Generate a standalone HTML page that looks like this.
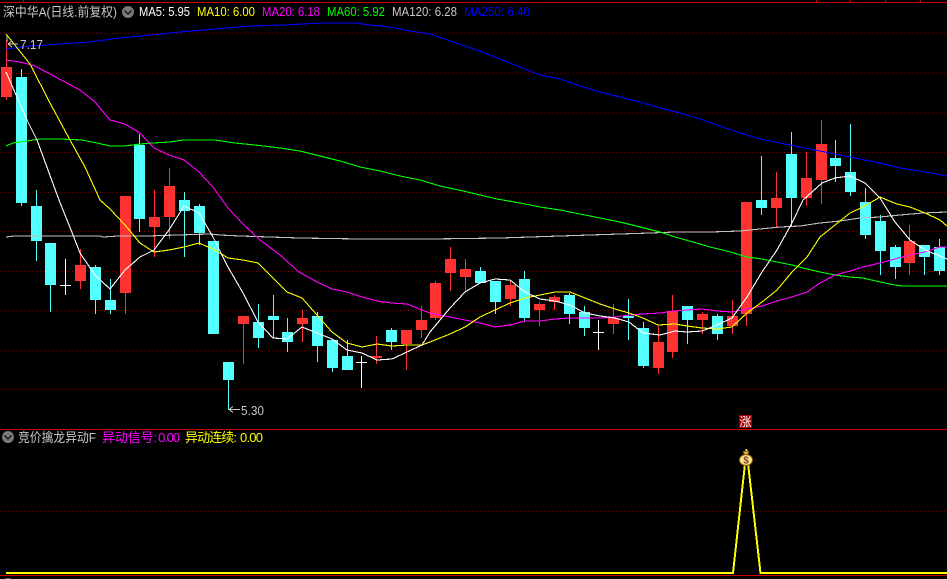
<!DOCTYPE html>
<html><head><meta charset="utf-8"><style>
html,body{margin:0;padding:0;background:#000;width:947px;height:579px;overflow:hidden}
svg{display:block}
text{font-family:"Liberation Sans","WenQuanYi Zen Hei","Noto Sans CJK SC",sans-serif;font-size:13px}
.l{fill:none;stroke-width:1.1;shape-rendering:crispEdges}
</style></head><body>
<svg width="947" height="579" viewBox="0 0 947 579" xmlns="http://www.w3.org/2000/svg">
<rect width="947" height="579" fill="#000"/>
<g shape-rendering="crispEdges">
<path d="M0 33.500H947M0 73.500H947M0 113.500H947M0 152.500H947M0 192.500H947M0 231.500H947M0 271.500H947M0 310.500H947M0 350.500H947M0 389.500H947M0 511.500H947" stroke="#800000" stroke-width="1" stroke-dasharray="1 3" fill="none"/>
<path d="M0 2.500H947M0 429.500H947M0 575.500H947M23.500 0V2M816.500 0V2M850.500 0V2M885.500 0V2M920.500 0V2" stroke="#c80000" stroke-width="1" fill="none"/>
<path fill="#ff3232" d="M1 67h11v30h-11zM6 40h1v60h-1zM75 265h11v16h-11zM80 249h1v40h-1zM120 196h11v97h-11zM125 293h1v21h-1zM149 217h11v10h-11zM154 190h1v67h-1zM164 186h11v31h-11zM169 168h1v71h-1zM238 316h11v8h-11zM243 316h1v48h-1zM297 318h11v6h-11zM302 310h1v32h-1zM371 356h11v2h-11zM376 336h1v28h-1zM401 330h11v14h-11zM406 344h1v26h-1zM416 320h11v10h-11zM421 306h1v32h-1zM430 283h11v35h-11zM435 281h1v39h-1zM445 259h11v14h-11zM450 247h1v44h-1zM460 269h11v8h-11zM465 259h1v32h-1zM505 285h11v14h-11zM510 281h1v25h-1zM534 304h11v6h-11zM539 302h1v24h-1zM549 297h11v5h-11zM554 295h1v15h-1zM608 318h11v6h-11zM613 304h1v30h-1zM653 342h11v26h-11zM658 326h1v48h-1zM667 311h11v41h-11zM672 295h1v63h-1zM697 314h11v6h-11zM702 312h1v22h-1zM727 316h11v10h-11zM732 300h1v34h-1zM741 202h11v112h-11zM746 202h1v124h-1zM771 198h11v10h-11zM776 172h1v56h-1zM801 178h11v20h-11zM806 152h1v54h-1zM816 144h11v36h-11zM821 120h1v84h-1zM904 241h11v22h-11zM909 225h1v50h-1z"/>
<path fill="#54ffff" d="M16 77h11v126h-11zM21 69h1v137h-1zM31 206h11v35h-11zM36 190h1v71h-1zM45 243h11v42h-11zM50 285h1v27h-1zM90 267h11v33h-11zM95 265h1v49h-1zM105 300h11v10h-11zM110 279h1v35h-1zM134 145h11v74h-11zM139 134h1v98h-1zM179 200h11v11h-11zM184 192h1v65h-1zM194 206h11v27h-11zM199 204h1v41h-1zM208 241h11v93h-11zM223 362h11v18h-11zM228 380h1v30h-1zM253 322h11v16h-11zM258 304h1v44h-1zM268 316h11v4h-11zM273 295h1v43h-1zM282 332h11v10h-11zM287 318h1v34h-1zM312 316h11v30h-11zM317 312h1v50h-1zM327 340h11v28h-11zM332 340h1v32h-1zM342 356h11v14h-11zM347 340h1v30h-1zM386 330h11v12h-11zM391 328h1v22h-1zM475 271h11v12h-11zM480 267h1v16h-1zM490 281h11v21h-11zM495 281h1v33h-1zM519 279h11v39h-11zM524 271h1v51h-1zM564 295h11v19h-11zM569 293h1v31h-1zM579 312h11v16h-11zM584 306h1v30h-1zM623 316h11v2h-11zM628 299h1v41h-1zM638 328h11v38h-11zM643 322h1v46h-1zM682 306h11v14h-11zM687 306h1v38h-1zM712 316h11v18h-11zM717 314h1v26h-1zM756 200h11v8h-11zM761 156h1v59h-1zM786 154h11v44h-11zM791 132h1v94h-1zM830 158h11v8h-11zM835 140h1v42h-1zM845 172h11v20h-11zM850 124h1v72h-1zM860 202h11v33h-11zM865 188h1v51h-1zM875 221h11v30h-11zM880 215h1v60h-1zM890 247h11v20h-11zM895 245h1v34h-1zM919 245h11v12h-11zM924 245h1v30h-1zM934 247h11v24h-11zM939 239h1v36h-1z"/>
<path fill="#fff" d="M60 285h11v1h-11zM65 259h1v36h-1zM356 362h11v1h-11zM361 356h1v32h-1zM593 332h11v1h-11zM598 320h1v30h-1z"/>
</g>
<!-- MA120 -->
<polyline class="l" stroke="#c0c0c0" points="6,237 14,236 100,236 103,237 118,236 147,236 177,235 210,234 220,235 240,236 300,238 360,239 430,239 500,238 530,237 560,236 590,235 620,234 650,233 675,232 710,232 740,231 760,229 780,227 800,226 820,223 840,221 860,218 880,217 900,215 923,213 947,212"/>
<!-- MA250 -->
<polyline class="l" stroke="#0000ff" points="6,49 30,46 60,44 90,42 120,38 150,35 180,32 215,29 250,26 285,25 320,23 355,23 370,25 390,27 410,31 430,34 453,42 477,50 500,59 520,67 540,75 560,79 580,86 600,92 620,97 640,102 660,108 680,113 700,119 720,126 740,133 760,139 780,143 800,147 820,151 840,155 860,159 880,163 900,168 920,171 947,176"/>
<!-- MA60 -->
<polyline class="l" stroke="#00ff00" points="6,146 13,143 27,141 40,139 60,139 82,140 97,143 110,146 125,146 140,144 153,143 170,142 183,140 215,140 235,143 255,145 280,148 300,151 320,156 340,161 360,167 380,171 400,176 420,180 440,186 463,191 480,195 497,199 520,203 540,207 560,210 590,216 620,222 640,227 660,232 675,237 693,242 710,247 727,251 747,257 762,259 777,262 792,265 807,269 820,272 835,275 850,277 863,278 880,282 895,285 903,286 947,286"/>
<!-- MA20 -->
<polyline class="l" stroke="#ff00ff" points="6,60 20,62 35,66 50,74 65,82 80,90 95,102 110,120 125,124 140,133 154,148 169,155 184,160 199,172 213,187 228,208 243,224 260,240 280,255 299,272 317,282 332,289 347,292 362,297 377,301 392,303 407,304 422,310 430,313 450,317 465,320 480,323 495,327 510,325 525,321 540,321 555,319 570,318 585,318 600,318 615,317 629,315 643,314 660,313 675,311 687,310 702,309 717,311 732,312 747,309 762,306 777,301 792,297 807,292 820,283 835,275 850,271 863,267 880,263 895,259 910,255 925,252 940,247 947,247"/>
<!-- MA10 -->
<polyline class="l" stroke="#ffff00" points="6,34 30,64 50,103 70,140 85,167 100,200 110,209 125,225 140,243 154,252 169,250 184,247 199,243 215,250 228,258 243,260 258,263 273,278 287,292 302,298 317,315 332,332 347,343 362,347 377,344 392,346 407,345 422,345 430,342 450,334 465,327 480,317 495,310 510,303 525,298 540,295 555,292 570,292 585,298 600,304 615,309 629,313 643,318 658,325 675,324 687,326 702,328 717,329 732,327 747,313 762,302 777,290 792,272 807,257 820,237 835,225 850,213 863,207 875,200 880,197 887,200 897,204 910,207 925,213 940,220 947,226"/>
<!-- MA5 -->
<polyline class="l" stroke="#ffffff" points="6,72 27,120 37,140 59,200 73,235 80,253 95,275 110,289 125,270 140,257 154,250 169,230 184,206 199,213 213,237 228,267 243,293 258,322 273,338 287,339 302,327 317,333 332,339 347,350 362,353 377,360 392,359 407,352 422,345 430,332 450,308 465,292 480,283 495,279 510,280 525,292 540,299 555,301 570,305 585,313 600,316 615,318 629,322 643,333 660,335 675,331 687,332 702,331 717,325 732,318 747,297 762,272 777,250 792,223 803,200 822,183 835,178 850,176 865,183 880,198 895,222 910,240 925,250 947,259"/>
<!-- indicator -->
<polyline points="6,573 733,573 746.500,450 760.500,573 947,573" fill="none" stroke="#ffff00" stroke-width="2" shape-rendering="crispEdges"/>
<!-- money bag -->
<g>
<ellipse cx="746" cy="460" rx="6.500" ry="5.500" fill="#ffe680" stroke="#8a5a10" stroke-width="1"/>
<path d="M743 451.500h6l-1.500 3h-3z" fill="#e8b040" stroke="#8a5a10" stroke-width=".7"/>
<rect x="745.500" y="449" width="1.500" height="2" fill="#ffe680"/>
<text x="746" y="463.500" text-anchor="middle" style="font-size:10px;font-weight:bold" fill="#7a4030">$</text>
</g>
<!-- badge -->
<rect x="739" y="415" width="13" height="13" fill="#a80000" shape-rendering="crispEdges"/>
<text x="745.500" y="426" text-anchor="middle" style="font-size:12px" fill="#fff">涨</text>
<!-- high/low labels -->
<path d="M18 44H8M8 44L12 41M8 44L12 47M7 36V42" stroke="#c0c0c0" stroke-width="1" fill="none" shape-rendering="crispEdges"/>
<text x="20" y="49" fill="#c8c8c8" textLength="23" lengthAdjust="spacingAndGlyphs">7.17</text>
<path d="M240 409.500H229M229 409.500L233 406.500M229 409.500L233 412.500" stroke="#c0c0c0" stroke-width="1" fill="none" shape-rendering="crispEdges"/>
<text x="241" y="415" fill="#c8c8c8" textLength="23" lengthAdjust="spacingAndGlyphs">5.30</text>
<!-- header -->
<text x="3" y="16.500" fill="#c8c8c8" textLength="114" lengthAdjust="spacingAndGlyphs">深中华A(日线.前复权)</text>
<circle cx="128" cy="12" r="6" fill="#787878"/>
<path d="M124.500 10.500L128 14L131.500 10.500" stroke="#111" stroke-width="1.300" fill="none"/>
<text x="139" y="16" fill="#fff" textLength="51" lengthAdjust="spacingAndGlyphs">MA5: 5.95</text>
<text x="197" y="16" fill="#ffff00" textLength="58" lengthAdjust="spacingAndGlyphs">MA10: 6.00</text>
<text x="262" y="16" fill="#ff00ff" textLength="58" lengthAdjust="spacingAndGlyphs">MA20: 6.18</text>
<text x="327" y="16" fill="#00ff00" textLength="58" lengthAdjust="spacingAndGlyphs">MA60: 5.92</text>
<text x="392" y="16" fill="#c8c8c8" textLength="65" lengthAdjust="spacingAndGlyphs">MA120: 6.28</text>
<text x="464" y="16" fill="#0000ff" textLength="66" lengthAdjust="spacingAndGlyphs">MA250: 6.40</text>
<!-- indicator header -->
<circle cx="8" cy="437" r="6" fill="#787878"/>
<path d="M4.500 435.500L8 439L11.500 435.500" stroke="#111" stroke-width="1.300" fill="none"/>
<text x="18" y="442" fill="#c8c8c8" textLength="78" lengthAdjust="spacingAndGlyphs">竞价擒龙异动F</text>
<text x="102" y="442" fill="#ff00ff" textLength="55">异动信号:</text>
<text x="158" y="442" fill="#ff00ff" textLength="22">0.00</text>
<text x="185" y="442" fill="#ffff00" textLength="52">异动连续:</text>
<text x="240" y="442" fill="#ffff00" textLength="23">0.00</text>
<circle cx="8" cy="584" r="6" fill="#787878"/>
</svg>
</body></html>
